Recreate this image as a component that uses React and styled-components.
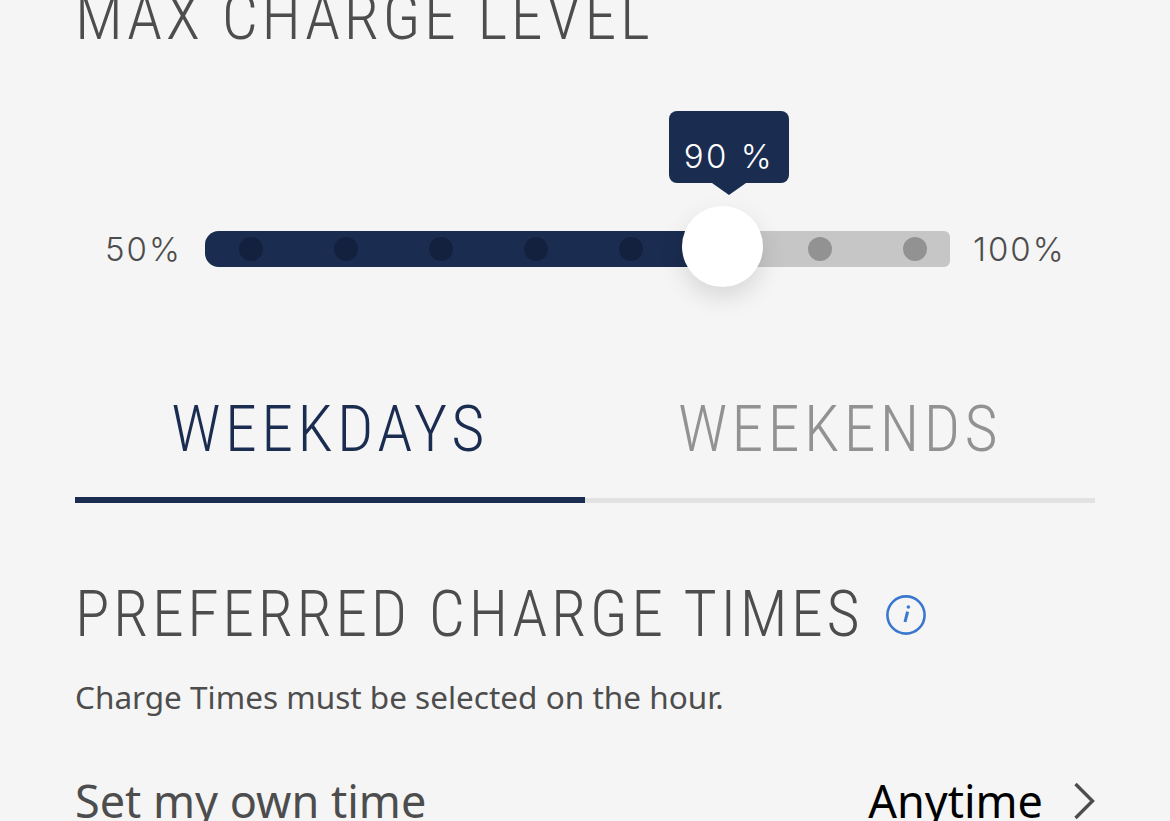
import React from "react";
import styled, { createGlobalStyle, css } from "styled-components";

const GlobalStyle = createGlobalStyle`
  html, body {
    margin: 0;
    height: 821px;
    overflow: hidden;
    background: #f5f5f5;
  }
`;

const dots = [46, 141, 236, 331, 426, 615, 710];
const fillWidth = 517;

const App = () => {
  return (
    <Page>
      <GlobalStyle />
      <Heading>MAX CHARGE LEVEL</Heading>
      <SliderRow>
        <RangeLabel>50%</RangeLabel>
        <Track>
          <Fill style={{ width: fillWidth }} />
          {dots.map((left) => (
            <Dot key={left} $left={left} $active={left < fillWidth} />
          ))}
          <Thumb />
          <Bubble>90 %</Bubble>
        </Track>
        <RangeLabel>100%</RangeLabel>
      </SliderRow>
      <Tabs>
        <Tab $active>WEEKDAYS</Tab>
        <Tab>WEEKENDS</Tab>
      </Tabs>
      <TitleRow>
        <Heading>PREFERRED CHARGE TIMES</Heading>
        <InfoIcon width="42" height="42" viewBox="0 0 42 42">
          <circle cx="21" cy="21" r="18.6" fill="none" stroke="#3a78cf" strokeWidth="2.6" />
          <path d="M22.6 17.6 L20 28" stroke="#3a78cf" strokeWidth="3" fill="none" />
          <circle cx="23.4" cy="13" r="1.8" fill="#3a78cf" />
        </InfoIcon>
      </TitleRow>
      <Note>Charge Times must be selected on the hour.</Note>
      <TimeRow>
        <TimeLabel>Set my own time</TimeLabel>
        <TimeValue>
          Anytime
          <Chevron width="22" height="38" viewBox="0 0 22 38">
            <path d="M2.5 2 L19.5 19 L2.5 36" fill="none" stroke="#4d4d4d" strokeWidth="3.4" />
          </Chevron>
        </TimeValue>
      </TimeRow>
    </Page>
  );
};

const headingFont = css`
  font-family: "Roboto", sans-serif;
  font-size: 64px;
  line-height: 64px;
  font-weight: 330;
  font-stretch: 75%;
  letter-spacing: 3.6px;
`;

const Page = styled.div`
  padding: 0 75px;
  margin-top: -14px;
  font-family: "Noto Sans", sans-serif;
  color: #4d4d4d;
`;

const Heading = styled.h2`
  ${headingFont}
  margin: 0;
  color: #4d4d4d;
  white-space: nowrap;
`;

const SliderRow = styled.div`
  display: flex;
  align-items: center;
  gap: 23px;
  margin: 181px 0 0 30px;
  height: 36px;
`;

const RangeLabel = styled.span`
  font-family: "Inter", sans-serif;
  font-size: 33px;
  font-weight: 300;
  line-height: 36px;
  letter-spacing: 2px;
  color: #4d4d4d;
`;

const Track = styled.div`
  position: relative;
  flex: none;
  width: 745px;
  height: 36px;
  border-radius: 14px 6px 6px 14px;
  background: #c6c6c6;
`;

const Fill = styled.div`
  height: 100%;
  border-radius: 14px 0 0 14px;
  background: #1a2c50;
`;

const Dot = styled.span`
  position: absolute;
  top: 6px;
  left: ${(p) => p.$left - 12}px;
  width: 24px;
  height: 24px;
  border-radius: 50%;
  background: ${(p) => (p.$active ? "#13213f" : "#929292")};
`;

const Thumb = styled.div`
  position: absolute;
  top: -25px;
  left: 477px;
  width: 81px;
  height: 81px;
  border-radius: 50%;
  background: #fff;
  box-shadow: 0 10px 24px rgba(0, 0, 0, 0.12);
`;

const Bubble = styled.div`
  position: absolute;
  top: -120px;
  left: 464px;
  width: 120px;
  height: 72px;
  padding-top: 9px;
  box-sizing: border-box;
  border-radius: 8px;
  background: #1a2c50;
  color: #fff;
  font-family: "Inter", sans-serif;
  font-size: 33px;
  font-weight: 300;
  line-height: 72px;
  letter-spacing: 2.5px;
  text-align: center;

  &::after {
    content: "";
    position: absolute;
    left: 43px;
    bottom: -12px;
    border-top: 12px solid #1a2c50;
    border-left: 17px solid transparent;
    border-right: 17px solid transparent;
  }
`;

const Tabs = styled.div`
  display: grid;
  grid-template-columns: 1fr 1fr;
  margin-top: 131px;
`;

const Tab = styled.div`
  ${headingFont}
  height: 105px;
  box-sizing: border-box;
  border-bottom: ${(p) => (p.$active ? "6px solid #1a2c50" : "5px solid #e2e2e2")};
  letter-spacing: 4.4px;
  text-align: center;
  color: ${(p) => (p.$active ? "#1a2c50" : "#929292")};
`;

const TitleRow = styled.div`
  display: flex;
  align-items: center;
  gap: 22px;
  margin-top: 80px;
`;

const InfoIcon = styled.svg`
  flex: none;
`;

const Note = styled.p`
  margin: 29px 0 0;
  font-size: 31.5px;
  line-height: 42px;
  color: #4d4d4d;
`;

const TimeRow = styled.div`
  display: flex;
  align-items: center;
  justify-content: space-between;
  margin-top: 53px;
`;

const TimeLabel = styled.span`
  font-size: 45px;
  line-height: 60px;
  color: #4d4d4d;
`;

const TimeValue = styled.span`
  display: flex;
  align-items: center;
  gap: 30px;
  font-size: 45px;
  line-height: 60px;
  color: #000;
`;

const Chevron = styled.svg`
  flex: none;
`;

export default App;
